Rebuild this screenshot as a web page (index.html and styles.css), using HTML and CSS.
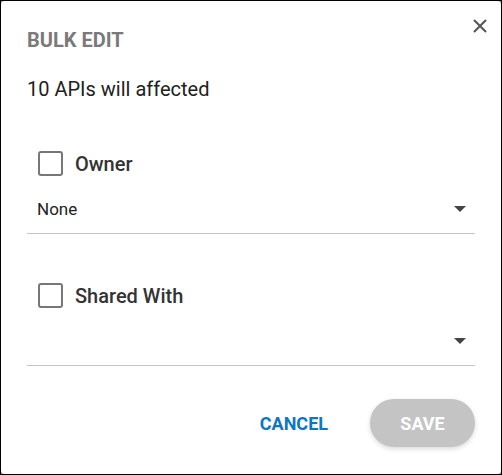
FILE: index.html
```html
<!DOCTYPE html>
<html lang="en">
<head>
    <meta charset="UTF-8">
    <title>Bulk Edit</title>
    <link rel="stylesheet" href="styles.css">
</head>
<body>
    <div class="frame">
        <div class="dialog">
            <button class="close" aria-label="Close">
                <svg width="14" height="14" viewBox="0 0 14 14">
                    <path d="M1 1L13 13M13 1L1 13" stroke="#555" stroke-width="2" fill="none"/>
                </svg>
            </button>
            <h1 class="title">BULK EDIT</h1>
            <p class="summary">10 APIs will affected</p>

            <div class="field">
                <label class="check">
                    <span class="box"></span>
                    <span>Owner</span>
                </label>
                <div class="select">
                    <span>None</span>
                    <span class="arrow"></span>
                </div>
            </div>

            <div class="field">
                <label class="check">
                    <span class="box"></span>
                    <span>Shared With</span>
                </label>
                <div class="select">
                    <span></span>
                    <span class="arrow"></span>
                </div>
            </div>

            <div class="actions">
                <button class="btn-text">CANCEL</button>
                <button class="btn-save" disabled>SAVE</button>
            </div>
        </div>
    </div>
</body>
</html>
```

FILE: styles.css
```css
body {
    margin: 0;
    font-family: Roboto, "Noto Sans", sans-serif;
    background: #000;
}

.frame {
    width: 500px;
    height: 473px;
    border: 1px solid #000;
    background: #9e9e9e;
}

.dialog {
    position: relative;
    height: 100%;
    box-sizing: border-box;
    background: #fff;
    border-radius: 4px;
    padding: 27px 26px 0 26px;
}

.close {
    position: absolute;
    top: 18px;
    right: 14px;
    background: none;
    border: none;
    padding: 0;
    cursor: pointer;
}

.title {
    margin: 0;
    font-size: 20px;
    font-weight: 700;
    color: #7a7a7a;
    line-height: 24px;
}

.summary {
    margin: 25px 0 0;
    font-size: 20px;
    color: #212121;
    line-height: 24px;
}

.field {
    margin-top: 50px;
}

.field + .field {
    margin-top: 49px;
}

.check {
    display: flex;
    align-items: center;
    gap: 12px;
    padding-left: 11px;
    font-size: 20px;
    font-weight: 500;
    color: #333;
    line-height: 24px;
}

.box {
    width: 21px;
    height: 21px;
    border: 2px solid #777;
    border-radius: 3px;
}

.select {
    display: flex;
    align-items: center;
    justify-content: space-between;
    height: 48px;
    margin-top: 9px;
    padding: 0 9px 0 10px;
    border-bottom: 1px solid #c4c4c4;
    font-size: 17px;
    color: #222;
}

.arrow {
    width: 0;
    height: 0;
    border-left: 6px solid transparent;
    border-right: 6px solid transparent;
    border-top: 6px solid #444;
}

.actions {
    display: flex;
    justify-content: flex-end;
    align-items: center;
    gap: 42px;
    margin-top: 33px;
}

.btn-text {
    background: none;
    border: none;
    padding: 0;
    font-family: inherit;
    font-size: 18px;
    font-weight: 700;
    color: #0a78c2;
    cursor: pointer;
}

.btn-save {
    width: 105px;
    height: 48px;
    border: none;
    border-radius: 24px;
    background: #c4c4c4;
    color: #fff;
    font-family: inherit;
    font-size: 18px;
    font-weight: 700;
    box-shadow: 0 2px 5px rgba(0, 0, 0, 0.15);
}
```
